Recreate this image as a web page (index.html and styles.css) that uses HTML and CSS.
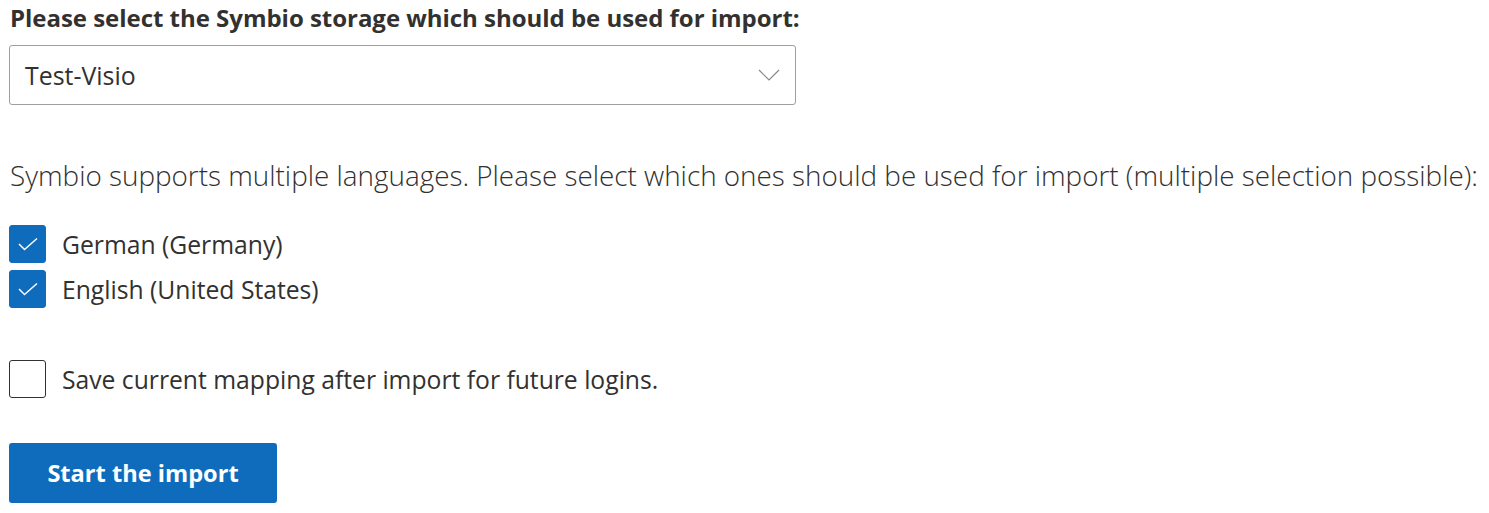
FILE: index.html
```html
<!DOCTYPE html>
<html>
<head>
<meta charset="utf-8">
<link rel="stylesheet" href="styles.css">
</head>
<body>
<div class="page">
  <h1 class="title">Please select the Symbio storage which should be used for import:</h1>
  <div class="select">
    <span class="select-value">Test-Visio</span>
    <svg class="chevron" width="22" height="12" viewBox="0 0 22 12"><path d="M1 1 L11 11 L21 1" fill="none" stroke="#8a8886" stroke-width="1.2"/></svg>
  </div>
  <p class="intro">Symbio supports multiple languages. Please select which ones should be used for import (multiple selection possible):</p>
  <div class="checks">
    <label class="check"><span class="box checked"><svg width="22" height="14" viewBox="0 0 22 14"><path d="M2 7 L7.5 12.5 L20 1.5" fill="none" stroke="#fff" stroke-width="1.5"/></svg></span><span class="label">German (Germany)</span></label>
    <label class="check"><span class="box checked"><svg width="22" height="14" viewBox="0 0 22 14"><path d="M2 7 L7.5 12.5 L20 1.5" fill="none" stroke="#fff" stroke-width="1.5"/></svg></span><span class="label">English (United States)</span></label>
  </div>
  <label class="check save"><span class="box"></span><span class="label">Save current mapping after import for future logins.</span></label>
  <button class="btn">Start the import</button>
</div>
</body>
</html>
```
FILE: styles.css
```css
html, body { margin: 0; padding: 0; background: #fff; }
body { font-family: "Open Sans", "Noto Sans", sans-serif; color: #323130; }
.page { padding: 4px 9px 0 9px; display: flex; flex-direction: column; align-items: flex-start; }
.title { font-size: 24px; font-weight: 700; margin: 0 0 0 1px; line-height: 28px; letter-spacing: -0.03px; }
.select { margin-top: 13px; width: 785px; height: 58px; border: 1px solid #a19f9d; border-radius: 3px; display: flex; align-items: center; justify-content: space-between; box-sizing: content-box; }
.select-value { font-size: 24.9px; padding-left: 15px; }
.chevron { margin-right: 15px; }
.intro { margin: 52px 0 0 1px; font-size: 27.85px; font-weight: 300; line-height: 36px; color: #323130; white-space: nowrap; }
.checks { margin-top: 32px; display: flex; flex-direction: column; gap: 7px; }
.check { display: flex; align-items: center; gap: 16px; }
.box { width: 35px; height: 36px; border: 1px solid #323130; border-radius: 3px; display: flex; align-items: center; justify-content: center; box-sizing: content-box; }
.box.checked { background: #0f6cbd; border-color: #0f6cbd; }
.label { font-size: 24.7px; }
.save { margin-top: 52px; }
.btn { margin-top: 45px; width: 268px; height: 60px; background: #0f6cbd; color: #fff; border: none; border-radius: 3px; font-family: inherit; font-size: 23.6px; font-weight: 700; }
```
